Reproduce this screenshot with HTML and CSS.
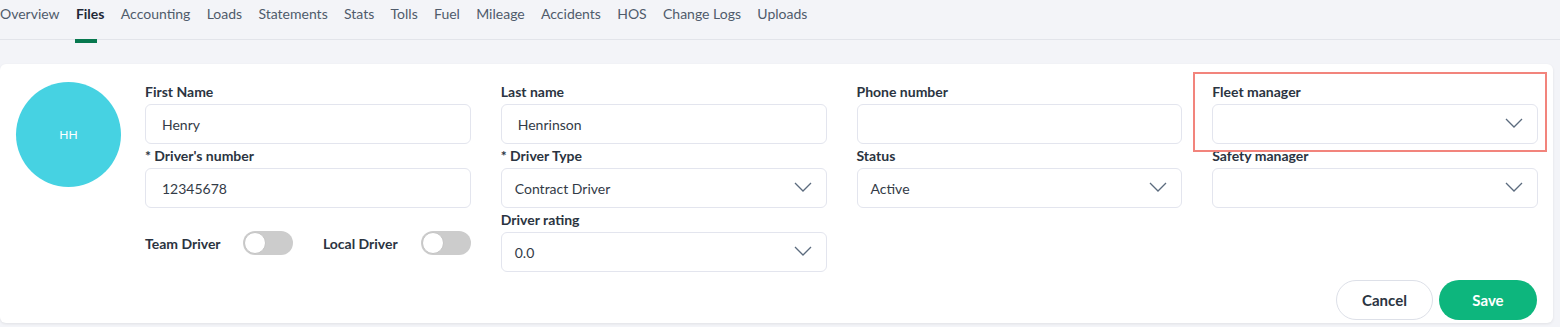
FILE: index.html
```html
<!DOCTYPE html>
<html lang="en">
<head>
    <meta charset="UTF-8">
    <meta name="viewport" content="width=device-width, initial-scale=1.0">
    <title>Driver Files</title>
    <link rel="stylesheet" href="styles.css">
</head>
<body>

<!-- Tabs -->
<nav class="tabs">
    <a class="tab">Overview</a>
    <a class="tab active">Files</a>
    <a class="tab">Accounting</a>
    <a class="tab">Loads</a>
    <a class="tab">Statements</a>
    <a class="tab">Stats</a>
    <a class="tab">Tolls</a>
    <a class="tab">Fuel</a>
    <a class="tab">Mileage</a>
    <a class="tab">Accidents</a>
    <a class="tab">HOS</a>
    <a class="tab">Change Logs</a>
    <a class="tab">Uploads</a>
</nav>

<div class="card">
    <div class="avatar">HH</div>

    <div class="form">
        <div class="grid">
            <!-- Column 1 -->
            <div class="col">
                <div class="field">
                    <label>First Name</label>
                    <div class="input">Henry</div>
                </div>
                <div class="field">
                    <label>* Driver's number</label>
                    <div class="input">12345678</div>
                </div>
                <div class="toggles">
                    <div class="toggle-item">
                        <span>Team Driver</span>
                        <span class="switch"></span>
                    </div>
                    <div class="toggle-item">
                        <span>Local Driver</span>
                        <span class="switch"></span>
                    </div>
                </div>
            </div>

            <!-- Column 2 -->
            <div class="col">
                <div class="field">
                    <label>Last name</label>
                    <div class="input">Henrinson</div>
                </div>
                <div class="field">
                    <label>* Driver Type</label>
                    <div class="input select">Contract Driver
                        <svg class="chevron" viewBox="0 0 18 10"><path d="M1 1l8 8 8-8"/></svg>
                    </div>
                </div>
                <div class="field">
                    <label>Driver rating</label>
                    <div class="input select">0.0
                        <svg class="chevron" viewBox="0 0 18 10"><path d="M1 1l8 8 8-8"/></svg>
                    </div>
                </div>
            </div>

            <!-- Column 3 -->
            <div class="col">
                <div class="field">
                    <label>Phone number</label>
                    <div class="input"></div>
                </div>
                <div class="field">
                    <label>Status</label>
                    <div class="input select">Active
                        <svg class="chevron" viewBox="0 0 18 10"><path d="M1 1l8 8 8-8"/></svg>
                    </div>
                </div>
            </div>

            <!-- Column 4 -->
            <div class="col">
                <div class="field">
                    <label>Fleet manager</label>
                    <div class="input select">
                        <svg class="chevron" viewBox="0 0 18 10"><path d="M1 1l8 8 8-8"/></svg>
                    </div>
                </div>
                <div class="field">
                    <label>Safety manager</label>
                    <div class="input select">
                        <svg class="chevron" viewBox="0 0 18 10"><path d="M1 1l8 8 8-8"/></svg>
                    </div>
                </div>
            </div>
        </div>

        <div class="actions">
            <button class="btn cancel">Cancel</button>
            <button class="btn save">Save</button>
        </div>
    </div>

    <!-- highlight box -->
    <div class="highlight"></div>
</div>

</body>
</html>
```

FILE: styles.css
```css
body {
    margin: 0;
    padding: 0;
    font-family: 'Lato', 'Open Sans', sans-serif;
    background-color: #f3f4f8;
    color: #2b3441;
    height: 327px;
    overflow: hidden;
}
.tabs {
    display: flex;
    gap: 16.3px;
    height: 39px;
    border-bottom: 1px solid #e2e4ea;
    box-sizing: content-box;
}
.tab {
    position: relative;
    font-size: 14px;
    line-height: 28px;
    color: #4f5b6b;
}
.tab.active {
    color: #1f2937;
    font-weight: 700;
}
.tab.active::after {
    content: '';
    position: absolute;
    left: -1px;
    top: 39px;
    width: 22px;
    height: 4px;
    background-color: #07784f;
}
.card {
    position: relative;
    display: flex;
    gap: 24px;
    margin: 24px 7px 0 0;
    padding: 15px 15px 3px 16px;
    background-color: #fff;
    border-radius: 6px;
    box-shadow: 0 1px 3px rgba(0, 0, 0, 0.08);
}
.avatar {
    flex: none;
    width: 105px;
    height: 105px;
    margin-top: 3px;
    border-radius: 50%;
    background-color: #46d2e2;
    color: #fff;
    font-size: 12px;
    display: flex;
    justify-content: center;
    align-items: center;
}
.form {
    flex: 1;
}
.grid {
    display: grid;
    grid-template-columns: repeat(4, 1fr);
    column-gap: 30px;
}
.field label {
    display: block;
    font-size: 14px;
    font-weight: 700;
    line-height: 24px;
    color: #2b3441;
}
.field:first-child label {
    line-height: 25px;
}
.input {
    position: relative;
    height: 40px;
    box-sizing: border-box;
    border: 1px solid #e3e5ee;
    border-radius: 6px;
    padding: 0 16px;
    display: flex;
    align-items: center;
    font-size: 14px;
    color: #333b47;
}
.input.select {
    padding-left: 13px;
}
.chevron {
    position: absolute;
    right: 14px;
    top: 13px;
    width: 18px;
    height: 10px;
    fill: none;
    stroke: #5b6b7e;
    stroke-width: 1.3;
}
.toggles {
    display: flex;
    gap: 30px;
    margin-top: 23px;
    height: 24px;
}
.toggle-item {
    flex: 1;
    display: flex;
    justify-content: space-between;
    align-items: center;
    font-size: 14px;
    font-weight: 700;
}
.switch {
    position: relative;
    width: 50px;
    height: 24px;
    border-radius: 12px;
    background-color: #cccccc;
}
.switch::before {
    content: '';
    position: absolute;
    left: 1px;
    top: 1px;
    width: 20px;
    height: 20px;
    border: 1px solid #c4c4c4;
    border-radius: 50%;
    background-color: #fff;
}
.actions {
    display: flex;
    justify-content: flex-end;
    gap: 6px;
    margin-top: 8px;
}
.btn {
    height: 40px;
    border-radius: 20px;
    font-family: inherit;
    font-size: 15px;
    font-weight: 700;
    cursor: pointer;
}
.cancel {
    width: 97px;
    background-color: #fff;
    border: 1px solid #dde0e8;
    color: #2b3441;
}
.save {
    width: 98px;
    margin-right: 1px;
    background-color: #0db67d;
    border: none;
    color: #fff;
}
.highlight {
    position: absolute;
    left: 1193px;
    top: 8px;
    width: 350px;
    height: 76px;
    border: 2px solid #f2847c;
}
```
